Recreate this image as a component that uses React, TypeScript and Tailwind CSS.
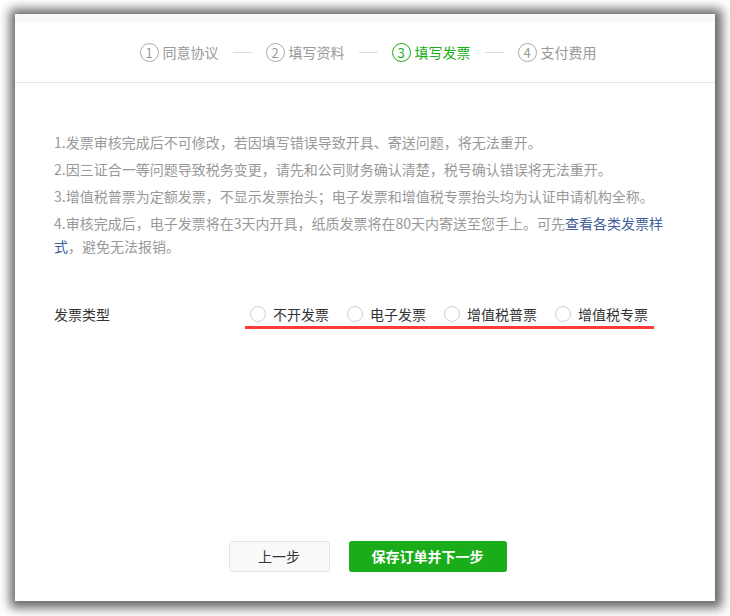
import React from "react";

const steps = [
  { n: "1", label: "同意协议" },
  { n: "2", label: "填写资料" },
  { n: "3", label: "填写发票", active: true },
  { n: "4", label: "支付费用" },
];

const types = ["不开发票", "电子发票", "增值税普票", "增值税专票"];

export default function App() {
  return (
    <div
      className="min-h-screen bg-white pl-[15px] pt-[14px]"
      style={{ fontFamily: '"Noto Sans CJK SC", "Liberation Sans", sans-serif' }}
    >
      <div className="flex h-[587px] w-[700px] flex-col bg-white shadow-[1px_1px_10px_6px_rgba(0,0,0,0.6)]">
        <div className="h-[8px] bg-[#f7f8fa]" />

        {/* steps */}
        <div className="flex h-[61px] items-center justify-center border-b border-[#e6e6e6] pl-[6px]">
          {steps.map((s, i) => (
            <React.Fragment key={s.n}>
              {i > 0 && <span className="mx-[14px] h-px w-[19px] bg-[#dcdcdc]" />}
              <div
                className={`flex items-center gap-[4px] text-[14px] leading-none ${
                  s.active ? "text-[#1aad19]" : "text-[#999]"
                }`}
              >
                <span
                  className={`flex h-[19px] w-[19px] items-center justify-center rounded-full border text-[13px] ${
                    s.active ? "border-[#1aad19]" : "border-[#aaa]"
                  }`}
                >
                  {s.n}
                </span>
                <span>{s.label}</span>
              </div>
            </React.Fragment>
          ))}
        </div>

        {/* body */}
        <div className="flex flex-1 flex-col pl-[39px] pt-[48px]">
          <div className="w-[618px] text-[14px] leading-[23px] text-[#999]">
            <p className="mb-[4px]">1.发票审核完成后不可修改，若因填写错误导致开具、寄送问题，将无法重开。</p>
            <p className="mb-[4px]">2.因三证合一等问题导致税务变更，请先和公司财务确认清楚，税号确认错误将无法重开。</p>
            <p className="mb-[4px]">3.增值税普票为定额发票，不显示发票抬头；电子发票和增值税专票抬头均为认证申请机构全称。</p>
            <p>
              4.审核完成后，电子发票将在3天内开具，纸质发票将在80天内寄送至您手上。可先
              <span className="text-[#3f5f99]">查看各类发票样</span>
              <span className="text-[#3f5f99]">式</span>，避免无法报销。
            </p>
          </div>

          <div className="mt-[46px] flex items-center text-[14px] leading-[20px] text-[#333]">
            <span className="w-[196px]">发票类型</span>
            <div className="relative flex items-center gap-[18px]">
              {types.map((t) => (
                <label key={t} className="flex items-center gap-[7px]">
                  <span className="h-[16px] w-[16px] rounded-full border border-[#cfcfcf] bg-white" />
                  <span>{t}</span>
                </label>
              ))}
              <span className="absolute left-[-5px] right-[-6px] top-[22px] h-[3px] bg-[#ff3838]" />
            </div>
          </div>

          <div className="mt-auto flex justify-center gap-[19px] pb-[29px] pr-[34px]">
            <button className="h-[31px] w-[101px] rounded-[3px] border border-[#e3e3e3] bg-[#f9f9f9] text-[14px] text-[#333]">
              上一步
            </button>
            <button className="h-[31px] w-[158px] rounded-[3px] bg-[#1aad19] text-[14px] font-bold text-white">
              保存订单并下一步
            </button>
          </div>
        </div>
      </div>
    </div>
  );
}
